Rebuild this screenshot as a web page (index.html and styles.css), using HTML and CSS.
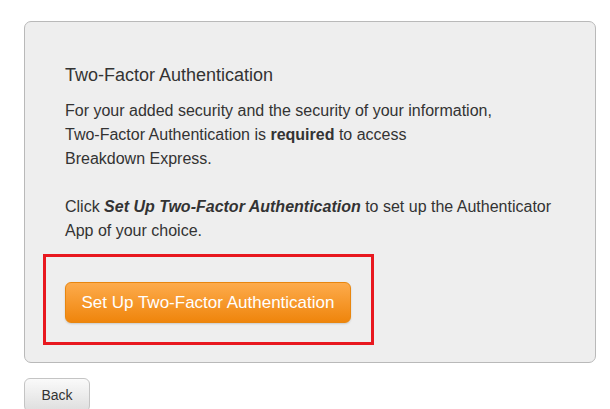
FILE: index.html
```html
<!DOCTYPE html>
<html>
<head>
<meta charset="utf-8">
<link rel="stylesheet" href="styles.css">
</head>
<body>
<div class="page">
  <div class="panel">
    <h2 class="title">Two-Factor Authentication</h2>
    <p class="text">For your added security and the security of your information,<br>Two-Factor Authentication is <strong>required</strong> to access<br>Breakdown Express.</p>
    <p class="text">Click <strong><em>Set Up Two-Factor Authentication</em></strong> to set up the Authenticator App of your choice.</p>
    <div class="highlight">
      <button class="btn-orange">Set Up Two-Factor Authentication</button>
    </div>
  </div>
  <button class="btn-back">Back</button>
</div>
</body>
</html>
```
FILE: styles.css
```css
html, body {
  margin: 0;
  padding: 0;
  background: #fff;
}
body {
  font-family: "Liberation Sans", Arial, sans-serif;
  color: #333;
}
.page {
  padding: 21px 14px 0 24px;
}
.panel {
  width: 572px;
  box-sizing: border-box;
  background: #eeeeee;
  border: 1px solid #b9b9b9;
  border-radius: 7px;
  padding: 41px 41px 17px 40px;
}
.title {
  margin: 0 0 12px 0;
  font-size: 18px;
  font-weight: normal;
  line-height: 24px;
  color: #333;
}
.text {
  margin: 0 0 24px 0;
  font-size: 16px;
  line-height: 24px;
}
.text:last-of-type {
  margin-bottom: 11px;
}
.highlight {
  display: inline-block;
  margin-left: -22px;
  border: 3px solid #e8181f;
  padding: 25px 20px 19px 19px;
}
.btn-orange {
  display: block;
  width: 286px;
  font-family: "Liberation Sans", Arial, sans-serif;
  font-size: 17px;
  color: #fff;
  height: 41px;
  padding: 0;
  border: 1px solid #e8860f;
  border-radius: 6px;
  background: linear-gradient(#fdab4c, #ef850c);
  box-shadow: 0 1px 2px rgba(0,0,0,0.15);
}
.btn-back {
  display: block;
  width: 66px;
  margin-top: 15px;
  font-family: "Liberation Sans", Arial, sans-serif;
  font-size: 14px;
  color: #333;
  height: 34px;
  padding: 0;
  border: 1px solid #c4c4c4;
  border-radius: 6px;
  background: linear-gradient(#fafafa, #dedede);
}
```
